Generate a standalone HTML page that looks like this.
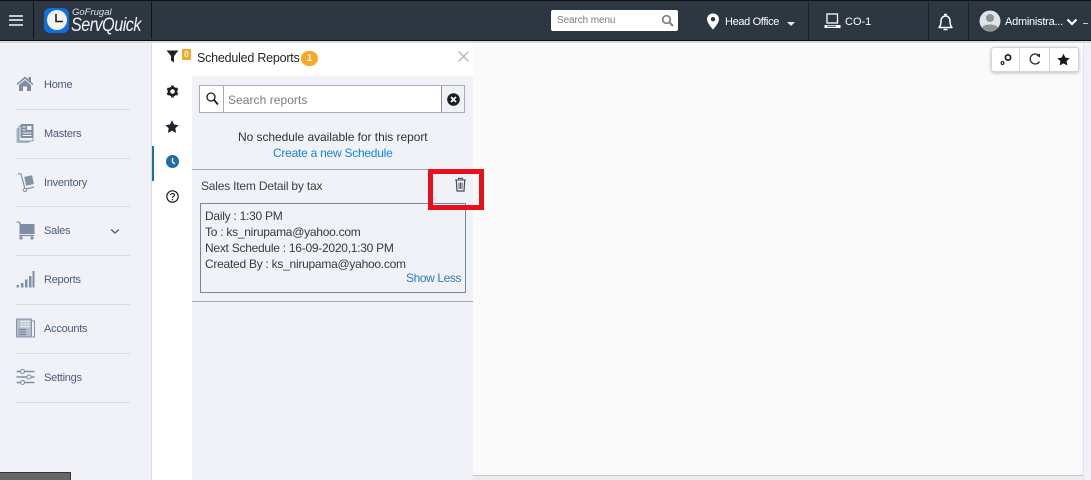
<!DOCTYPE html>
<html><head><meta charset="utf-8"><style>
html,body{margin:0;padding:0;width:1091px;height:480px;overflow:hidden;background:#f0f2f8;font-family:"Liberation Sans",sans-serif}
.a{position:absolute}
.t{position:absolute;white-space:nowrap}
.nav{font-size:11px;color:#4a5b78;letter-spacing:-.25px}
.hr{position:absolute;left:16px;width:114px;height:1px;background:#d8dde2}
.d{font-size:12px;color:#333b45;letter-spacing:-.26px}
svg{position:absolute;overflow:visible}
</style></head><body>
<!-- top bar -->
<div class="a" style="left:0;top:0;width:1091px;height:41px;background:#2d3742;border-top:1px solid #111;border-bottom:1px solid #0c0f12;box-sizing:border-box"></div>
<div class="a" style="left:0;top:41px;width:1091px;height:2px;background:#d6d9de"></div>
<div class="a" style="left:33px;top:2px;width:1px;height:37px;background:#0f1317"></div>
<div class="a" style="left:151px;top:2px;width:1px;height:37px;background:#0f1317"></div>
<div class="a" style="left:808px;top:2px;width:1px;height:37px;background:#1a2026"></div>
<div class="a" style="left:928px;top:2px;width:1px;height:37px;background:#1a2026"></div>
<div class="a" style="left:968px;top:2px;width:1px;height:37px;background:#1a2026"></div>
<!-- hamburger -->
<div class="a" style="left:9px;top:15px;width:14px;height:2px;background:#c4c9ce"></div>
<div class="a" style="left:9px;top:19px;width:14px;height:2px;background:#c4c9ce"></div>
<div class="a" style="left:9px;top:24px;width:14px;height:2px;background:#c4c9ce"></div>
<!-- logo -->
<div class="a" style="left:44px;top:8px;width:25px;height:25px;border-radius:6px;background:#0f6fe0"></div>
<div class="a" style="left:47px;top:10px;width:20px;height:20px;border-radius:50%;background:#f3f3ee"></div>
<svg style="left:0;top:0" width="80" height="40"><path d="M56 14V21.500H63" stroke="#222" stroke-width="1.600" fill="none"/></svg>
<div class="t" style="left:72px;top:7px;font-size:9.500px;font-style:italic;color:#dfe2e5">GoFrugal</div>
<div class="t" style="left:71px;top:15px;font-size:19px;font-style:italic;color:#f2f3f4;letter-spacing:-.6px;transform:scaleX(.85);transform-origin:0 0">ServQuick</div>
<!-- search menu -->
<div class="a" style="left:551px;top:10px;width:127px;height:21px;background:#fff;border-radius:2px"></div>
<div class="t" style="left:557px;top:15px;font-size:10px;color:#767b80;letter-spacing:-.1px">Search menu</div>
<svg style="left:661px;top:14px" width="13" height="13" viewBox="0 0 13 13"><circle cx="5.500" cy="5.500" r="3.800" fill="none" stroke="#7b8085" stroke-width="1.700"/><path d="M8.300 8.300L12 12" stroke="#7b8085" stroke-width="2"/></svg>
<!-- location -->
<svg style="left:706px;top:13px" width="14" height="17" viewBox="0 0 14 17"><path fill-rule="evenodd" d="M7 0.500C3.500 0.500 1 3 1 6.200C1 10 7 16.500 7 16.500S13 10 13 6.200C13 3 10.500 0.500 7 0.500ZM7 4A2.200 2.200 0 1 1 7 8.400A2.200 2.200 0 0 1 7 4Z" fill="#fff"/></svg>
<div class="t" style="left:725px;top:16px;font-size:11px;color:#fff;letter-spacing:-.35px">Head Office</div>
<div class="a" style="left:787px;top:22px;width:0;height:0;border-left:4px solid transparent;border-right:4px solid transparent;border-top:4px solid #e8e8e8"></div>
<!-- CO-1 -->
<svg style="left:824px;top:13px" width="18" height="16" viewBox="0 0 18 16"><rect x="3" y="1" width="10.500" height="9" fill="none" stroke="#fff" stroke-width="1.300"/><path d="M0.500 12H16.500V15H0.500Z" fill="#fff"/><path d="M3 13.200H12" stroke="#2d3742"/></svg>
<div class="t" style="left:845px;top:16px;font-size:11px;color:#fff">CO-1</div>
<!-- bell -->
<svg style="left:937px;top:13px" width="17" height="19" viewBox="0 0 17 19"><path d="M2 14.500C3.500 13 4 11.500 4 8C4 5 6 3 8.500 3S13 5 13 8C13 11.500 13.500 13 15 14.500Z" fill="none" stroke="#fff" stroke-width="1.500" stroke-linejoin="round"/><path d="M7 1.500H10M6.500 16.500H10.500" stroke="#fff" stroke-width="1.500"/></svg>
<!-- avatar -->
<svg style="left:967px;top:10px" width="44" height="23" viewBox="0 0 44 23"><circle cx="23" cy="11" r="10.500" fill="#e1e3e5"/><circle cx="23" cy="8" r="4" fill="#8d9399"/><path d="M15 17.500C17 13.500 29 13.500 31 17.500A10.500 10.500 0 0 1 15 17.500Z" fill="#8d9399"/></svg>
<div class="t" style="left:1005px;top:16px;font-size:11px;color:#fff;letter-spacing:-.25px">Administra...</div>
<svg style="left:1066px;top:18px" width="12" height="8" viewBox="0 0 12 8"><path d="M1.500 1.500L6 6L10.500 1.500" fill="none" stroke="#fff" stroke-width="2.200"/></svg>
<div class="a" style="left:1083px;top:23px;width:5px;height:1px;background:#c8ccd0"></div>

<!-- left nav -->
<div class="a" style="left:151px;top:43px;width:1px;height:437px;background:#d8dce2"></div>
<svg style="left:16px;top:76px" width="18" height="15" viewBox="0 0 18 15"><path d="M0.500 8L9 0.500L12.500 3.500V1H15V5.700L17.500 8L16.500 9L9 2.700L1.500 9Z" fill="#7f8ea3"/><path d="M3 9L9 4L15 9V15H11V10.500H7V15H3Z" fill="#7f8ea3"/></svg>
<div class="t nav" style="left:44px;top:79px">Home</div>
<div class="hr" style="top:109px"></div>
<svg style="left:16px;top:123px" width="18" height="20" viewBox="0 0 18 20"><rect x="0.500" y="5" width="13" height="15" rx="1" fill="#aab4c4"/><rect x="3" y="3" width="14" height="15" rx="1" fill="#f0f2f8" stroke="#8a98ac"/><rect x="4.500" y="1" width="13" height="14" rx="1" fill="#7f8ea3"/><rect x="11" y="3" width="4.500" height="4" fill="#f0f2f8"/><path d="M6.500 4H9.500M6.500 7H9.500M6.500 10H15.500M6.500 12.500H15.500" stroke="#f0f2f8"/></svg>
<div class="t nav" style="left:44px;top:128px">Masters</div>
<div class="hr" style="top:158px"></div>
<svg style="left:17px;top:172px" width="18" height="20" viewBox="0 0 18 20"><path d="M1 1.500L4 2L8 17" fill="none" stroke="#8492a6" stroke-width="1.200"/><rect x="8" y="4" width="8" height="9" fill="#8492a6" transform="rotate(-12 12 8)"/><circle cx="8" cy="18" r="1.600" fill="none" stroke="#8492a6"/><path d="M9 17L17 15" stroke="#8492a6" stroke-width="1.200"/></svg>
<div class="t nav" style="left:44px;top:177px">Inventory</div>
<div class="hr" style="top:206px"></div>
<svg style="left:16px;top:221px" width="19" height="19" viewBox="0 0 19 19"><path d="M0.500 1H3L4 3.500H18V12.500H4V1" fill="#7f8ea3" stroke="#7f8ea3"/><path d="M3 14.500H18" stroke="#7f8ea3" stroke-width="1.300"/><circle cx="5" cy="17" r="1.600" fill="#7f8ea3"/><circle cx="16" cy="17" r="1.600" fill="#7f8ea3"/></svg>
<div class="t nav" style="left:44px;top:225px">Sales</div>
<svg style="left:110px;top:228px" width="10" height="7" viewBox="0 0 10 7"><path d="M1 1.500L5 5L9 1.500" fill="none" stroke="#59626e" stroke-width="1.400"/></svg>
<div class="hr" style="top:255px"></div>
<svg style="left:16px;top:270px" width="19" height="18" viewBox="0 0 19 18"><path d="M0.500 15h2.500v2.500h-2.500zM5 13h2.500v4.500H5zM9 9.500h2.500v8H9zM13 6h2.500v11.500H13zM16.500 1h2v16.500h-2z" fill="#7f8ea3"/></svg>
<div class="t nav" style="left:44px;top:274px">Reports</div>
<div class="hr" style="top:304px"></div>
<svg style="left:16px;top:318px" width="19" height="20" viewBox="0 0 19 20"><rect x="0.500" y="1" width="15" height="18" fill="#b4bdca" stroke="#8593a7"/><path d="M4 3.500H14M4 6H14M4 8.500H14M6 2V10M9 2V10M12 2V10" stroke="#f0f2f8" stroke-width=".7"/><path d="M2.500 11.500H10M2.500 14H10M2.500 16.500H10" stroke="#77879c" stroke-width="1.200"/><path d="M16 3H18.500V19H14.500" fill="none" stroke="#8593a7"/></svg>
<div class="t nav" style="left:44px;top:323px">Accounts</div>
<div class="hr" style="top:353px"></div>
<svg style="left:16px;top:369px" width="19" height="16" viewBox="0 0 19 16"><path d="M0.500 2.500H18.500M0.500 8H18.500M0.500 13.500H18.500" stroke="#7f8ea3" stroke-width="1.500"/><circle cx="6.500" cy="2.500" r="2" fill="#f0f2f8" stroke="#7f8ea3"/><circle cx="13" cy="8" r="2" fill="#f0f2f8" stroke="#7f8ea3"/><circle cx="6.500" cy="13.500" r="2" fill="#f0f2f8" stroke="#7f8ea3"/></svg>
<div class="t nav" style="left:44px;top:372px">Settings</div>
<div class="hr" style="top:402px"></div>
<div class="a" style="left:0;top:472px;width:71px;height:8px;background:#666;border-top:1px solid #333;border-right:1px solid #333;box-sizing:border-box"></div>

<!-- icon rail -->
<div class="a" style="left:152px;top:43px;width:40px;height:437px;background:#fff"></div>
<div class="a" style="left:152px;top:146px;width:2px;height:35px;background:#1f6fa6"></div>
<svg style="left:166px;top:50px" width="13" height="13" viewBox="0 0 13 13"><path d="M0.500 0.500H12.500L8 6V12.500L5 10.500V6Z" fill="#222"/></svg>
<div class="a" style="left:182px;top:49px;width:9px;height:11px;background:#f5a623;border-radius:1px;color:#fff;font-size:8px;font-weight:bold;line-height:11px;text-align:center">0</div>
<svg style="left:166px;top:85px" width="13" height="13" viewBox="0 0 13 13"><circle cx="6.500" cy="6.500" r="3.600" fill="none" stroke="#1c1f22" stroke-width="2.600"/><path d="M6.500 0.500V2.500M6.500 10.500V12.500M1.300 3.500L3 4.500M10 8.500L11.700 9.500M1.300 9.500L3 8.500M10 4.500L11.700 3.500" stroke="#1c1f22" stroke-width="2.600"/></svg>
<svg style="left:165px;top:120px" width="14" height="13" viewBox="0 0 14 13"><path d="M7 0.300L9 4.500L13.700 5.100L10.300 8.300L11.100 12.900L7 10.700L2.900 12.900L3.700 8.300L0.300 5.100L5 4.500Z" fill="#1c2530"/></svg>
<svg style="left:166px;top:155px" width="13" height="13" viewBox="0 0 13 13"><circle cx="6.500" cy="6.500" r="6.500" fill="#1f6fa6"/><path d="M6.500 3V7L9 9" fill="none" stroke="#fff" stroke-width="1.300"/></svg>
<svg style="left:166px;top:190px" width="13" height="13" viewBox="0 0 13 13"><circle cx="6.500" cy="6.500" r="5.700" fill="none" stroke="#1c1f22" stroke-width="1.200"/><path d="M4.600 5C4.800 3 8.400 3 8.400 5C8.400 6.300 6.500 6.300 6.500 8" fill="none" stroke="#1c1f22" stroke-width="1.100"/><circle cx="6.500" cy="9.700" r=".7" fill="#1c1f22"/></svg>

<!-- panel -->
<div class="a" style="left:192px;top:43px;width:281px;height:437px;background:#f0f2f8"></div>
<div class="a" style="left:192px;top:43px;width:281px;height:33px;background:#fff"></div>
<div class="t" style="left:197px;top:51px;font-size:12.500px;color:#1e2329;letter-spacing:-.22px">Scheduled Reports</div>
<div class="a" style="left:301px;top:51px;width:17px;height:15px;border-radius:8px;background:#f9a825;color:#fff;font-size:10px;font-weight:bold;line-height:15px;text-align:center">1</div>
<svg style="left:458px;top:51px" width="11" height="11" viewBox="0 0 11 11"><path d="M0.500 0.500L10.500 10.500M10.500 0.500L0.500 10.500" stroke="#b4bdc6" stroke-width="1.500"/></svg>
<!-- search -->
<div class="a" style="left:199px;top:85px;width:266px;height:28px;background:#fff;border:1px solid #a9adb2;box-sizing:border-box"></div>
<div class="a" style="left:223px;top:86px;width:1px;height:26px;background:#a9adb2"></div>
<div class="a" style="left:441px;top:86px;width:1px;height:26px;background:#8e9398"></div>
<div class="a" style="left:442px;top:86px;width:22px;height:26px;background:#f0f2f8"></div>
<svg style="left:206px;top:92px" width="13" height="14" viewBox="0 0 13 14"><circle cx="5" cy="5" r="4" fill="none" stroke="#1a1d20" stroke-width="1.300"/><path d="M8 8L12 12.500" stroke="#1a1d20" stroke-width="1.800"/></svg>
<div class="t" style="left:228px;top:93px;font-size:12px;color:#777d83;letter-spacing:.05px">Search reports</div>
<svg style="left:447px;top:93px" width="13" height="13" viewBox="0 0 13 13"><circle cx="6.500" cy="6.500" r="6.300" fill="#1c1f22"/><path d="M4 4L9 9M9 4L4 9" stroke="#fff" stroke-width="1.700"/></svg>
<div class="t" style="left:238px;top:130px;font-size:12px;color:#2c333a;letter-spacing:-.05px">No schedule available for this report</div>
<div class="t" style="left:273px;top:146px;font-size:12px;color:#1484dc;letter-spacing:-.25px">Create a new Schedule</div>
<div class="a" style="left:192px;top:169px;width:281px;height:1px;background:#a4a8ad"></div>
<div class="t" style="left:201px;top:179px;font-size:12px;color:#3a424c;letter-spacing:-.2px">Sales Item Detail by tax</div>
<!-- detail box -->
<div class="a" style="left:200px;top:203px;width:266px;height:90px;border:1px solid #6f8a9c;box-sizing:border-box"></div>
<div class="t d" style="left:205px;top:209px">Daily : 1:30 PM</div>
<div class="t d" style="left:205px;top:225px">To : ks_nirupama@yahoo.com</div>
<div class="t d" style="left:205px;top:241px">Next Schedule : 16-09-2020,1:30 PM</div>
<div class="t d" style="left:205px;top:257px">Created By : ks_nirupama@yahoo.com</div>
<div class="t" style="left:406px;top:271px;font-size:12px;color:#2f7ab5;letter-spacing:-.4px">Show Less</div>
<div class="a" style="left:192px;top:301px;width:281px;height:1px;background:#a4a8ad"></div>
<svg style="left:454px;top:177px" width="13" height="15" viewBox="0 0 13 15"><path d="M1 3H12M4.500 3V1.300H8.500V3" fill="none" stroke="#474d54" stroke-width="1.100"/><path d="M2.300 3.500L3 14H10L10.700 3.500" fill="none" stroke="#474d54" stroke-width="1.200"/><path d="M5 5.500V12M6.500 5.500V12M8 5.500V12" stroke="#474d54" stroke-width=".9"/></svg>

<!-- content -->
<div class="a" style="left:473px;top:43px;width:610px;height:433px;background:#fafafa;border-bottom:1px solid #c8c8ca;box-sizing:border-box"></div>
<div class="a" style="left:1083px;top:43px;width:8px;height:437px;background:#f0f2f8;border-left:1px solid #dfe2ea;box-sizing:border-box"></div>
<div class="a" style="left:473px;top:476px;width:610px;height:4px;background:#e9ecf1"></div>
<!-- red box above content -->
<div class="a" style="left:428px;top:169px;width:56px;height:41px;border:5px solid #e8101c;box-sizing:border-box"></div>
<!-- toolbar -->
<div class="a" style="left:991px;top:47px;width:88px;height:25px;background:#fff;border:1px solid #d3d5d8;border-radius:3px;box-shadow:0 1px 3px rgba(0,0,0,.25);box-sizing:border-box"></div>
<div class="a" style="left:1019px;top:48px;width:1px;height:23px;background:#d3d5d8"></div>
<div class="a" style="left:1049px;top:48px;width:1px;height:23px;background:#d3d5d8"></div>
<svg style="left:999px;top:52px" width="14" height="14" viewBox="0 0 14 14"><circle cx="9" cy="5.500" r="2.600" fill="none" stroke="#1c1f22" stroke-width="1.700"/><circle cx="3.500" cy="11" r="1.400" fill="none" stroke="#1c1f22" stroke-width="1.100"/></svg>
<svg style="left:1028px;top:52px" width="14" height="14" viewBox="0 0 14 14"><path d="M10.500 3.200A5 5 0 1 0 11.500 9.500" fill="none" stroke="#2a2d30" stroke-width="1.300"/><path d="M8.500 3.600L12 1.500L12 5.500Z" fill="#2a2d30"/></svg>
<svg style="left:1057px;top:53px" width="13" height="13" viewBox="0 0 14 13"><path d="M7 0.300L9 4.500L13.700 5.100L10.300 8.300L11.100 12.900L7 10.700L2.900 12.900L3.700 8.300L0.300 5.100L5 4.500Z" fill="#16191c"/></svg>
</body></html>
